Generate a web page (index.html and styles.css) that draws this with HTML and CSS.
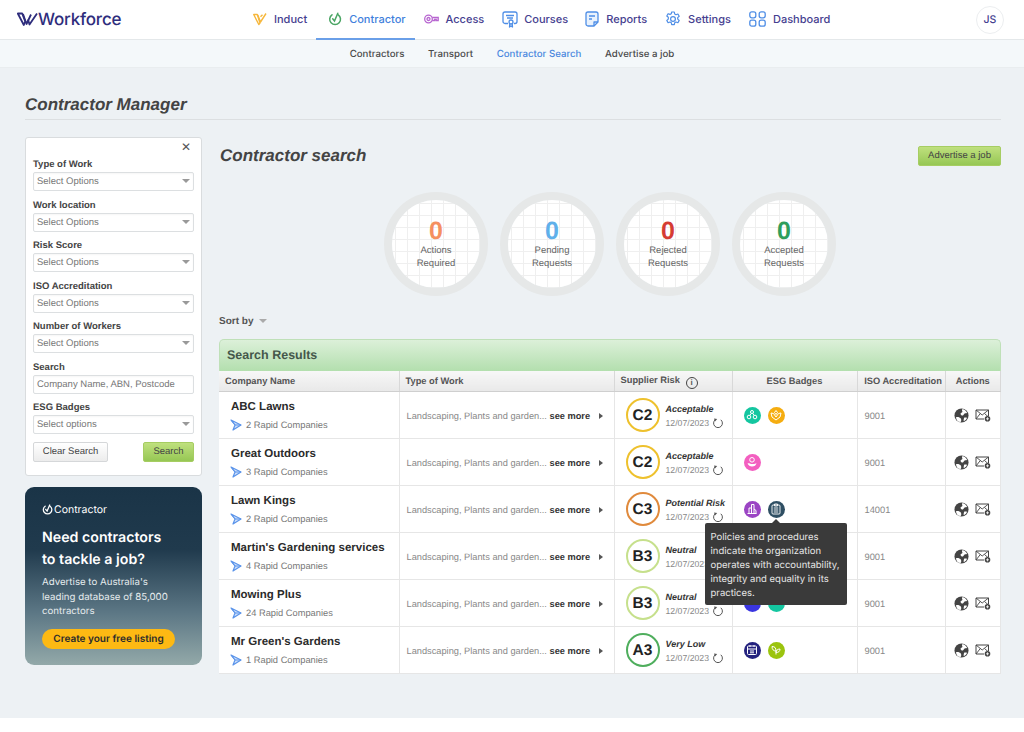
FILE: index.html
```html
<!DOCTYPE html>
<html>
<head>
    <title>Contractor Manager</title>
    <link rel="stylesheet" href="styles.css">
</head>
<body>
    <svg class="defs" width="0" height="0">
        <symbol id="rapid" viewBox="0 0 12 12">
            <path d="M1 1l10 5-8 5 2-5z" fill="#cfe0fb" stroke="#5b94ea" stroke-width="1.2" stroke-linejoin="round"/>
            <path d="M1 1l4 5h6" fill="none" stroke="#5b94ea" stroke-width="1"/>
        </symbol>
        <symbol id="refresh" viewBox="0 0 12 12">
            <path d="M8.8 2.8a4.4 4.4 0 1 1-5.6 0" fill="none" stroke="#555" stroke-width="1"/>
            <path d="M2 1.400l3.200.6-2.200 2.400z" fill="#555"/>
        </symbol>
        <symbol id="globe" viewBox="0 0 16 16">
            <circle cx="8" cy="8" r="7.5" fill="#444"/>
            <path d="M9 1c2 .5 4 2 5 4-1 1-2 0-3 1s-1 2-2 2-2-1-2-2 2-1 2-2-1-1 0-3zM2 10c2-1 4 0 5 1s1 3 0 4c-3 0-4-2-5-5zM11 10c1 0 2 0 3 .5-1 2-2 3-3.5 3.5-.5-1 0-3 .5-4z" fill="#fff"/>
        </symbol>
        <symbol id="mail" viewBox="0 0 16 14">
            <path d="M13.5 8V2H1v9h8" fill="#fff" stroke="#444" stroke-width="1"/>
            <path d="M1 2l6.2 5 6.3-5M1 11l4.3-5.500M13.5 9L9.5 5.500" fill="none" stroke="#444" stroke-width=".9"/>
            <circle cx="12.5" cy="10.8" r="2.8" fill="#444"/>
            <path d="M12.5 9.3v3M11 10.8h3" stroke="#fff" stroke-width=".8"/>
        </symbol>
        <symbol id="esg-people" viewBox="0 0 12 12">
            <g fill="none" stroke="#fff" stroke-width="1">
                <circle cx="6" cy="3" r="1.5"/><circle cx="3" cy="8" r="1.8"/><circle cx="9" cy="8" r="1.8"/>
                <path d="M5 4.500L4 6.400M7 4.500L8 6.400"/>
            </g>
        </symbol>
        <symbol id="esg-hands" viewBox="0 0 12 12">
            <g fill="none" stroke="#fff" stroke-width="1" stroke-linejoin="round">
                <path d="M6 5.500L4.500 3.500 6 1.500l1.500 2zM1 4l2.500.5L6 8l2.500-3.500L11 4l-1 4-4 3-4-3z"/>
            </g>
        </symbol>
        <symbol id="esg-care" viewBox="0 0 12 12">
            <circle cx="6" cy="3.8" r="2.3" fill="none" stroke="#fff" stroke-width="1"/>
            <path d="M1.500 7.500C3 6.800 4 7.300 5 8h3l2.500-.8c-.5 2-2 3.300-4.500 3.300-2 0-3.500-1-4.500-3z" fill="#fff"/>
        </symbol>
        <symbol id="esg-build" viewBox="0 0 12 12">
            <g fill="none" stroke="#fff" stroke-width="1">
                <path d="M1.500 10.500h9M3 10.500V5h2.500v5.500M5.500 10.500V1.500h2.500v9M8 6l2 1.500v3"/>
            </g>
        </symbol>
        <symbol id="esg-policy" viewBox="0 0 12 12">
            <g fill="none" stroke="#fff" stroke-width=".9">
                <rect x="2" y="2" width="8" height="9" rx="1"/>
                <path d="M4.500 1h3v2h-3zM3.800 5h4.400M3.800 7h4.400M3.800 9h4.400"/>
            </g>
        </symbol>
        <symbol id="esg-leaf" viewBox="0 0 12 12">
            <g fill="none" stroke="#fff" stroke-width="1" stroke-linejoin="round">
                <path d="M6 10.500V7M6 7C3.500 7 2 5.500 2 2.500c3 0 4 1.500 4 4.500zM6 8.500c0-2 1.500-3.500 4-3.500 0 2.500-1.500 3.500-4 3.500z"/>
            </g>
        </symbol>
        <symbol id="esg-cal" viewBox="0 0 12 12">
            <g fill="none" stroke="#fff" stroke-width="1">
                <rect x="1.500" y="2" width="9" height="8.500" rx="1"/>
                <path d="M1.500 5h9M4 1v2M8 1v2M4 7h4M4 8.800h4"/>
            </g>
        </symbol>
    </svg>

    <header class="topnav">
        <a class="logo">
            <svg width="21" height="15" viewBox="0 0 21 15" fill="none" stroke="#2e2d7c" stroke-width="1.8" stroke-linejoin="round">
                <path d="M.8 1.500h4.400l3 8L6.800 13z"/>
                <path d="M6 2l3.500 10L14 2.500"/>
                <path d="M11 7.500l1.500 5L20 1.500"/>
            </svg>
            <span>Workforce</span>
        </a>
        <nav class="mainlinks">
            <a class="mainlink">
                <svg width="14" height="14" viewBox="0 0 14 14" fill="none" stroke="#f6b73c" stroke-width="1.4" stroke-linejoin="round">
                    <path d="M.7 2.500h3.600L7 11 5.800 12.500z"/><path d="M4.800 3L7.500 10 13 1.500"/><path d="M7.500 4.800L9.500 2.800"/>
                </svg>
                Induct
            </a>
            <a class="mainlink active">
                <svg width="14" height="14" viewBox="0 0 14 14" fill="none" stroke="#4aa564" stroke-width="1.5" stroke-linecap="round">
                    <path d="M4 2.800a5.400 5.400 0 1 0 6.200 0"/><path d="M4.700 6.800l1.800 2.200L9.800 1.300"/>
                </svg>
                Contractor
            </a>
            <a class="mainlink">
                <svg width="15" height="14" viewBox="0 0 15 14" fill="none" stroke="#b765d0" stroke-width="1.3">
                    <circle cx="4.500" cy="7" r="3.800"/><circle cx="4.500" cy="7" r="1.500"/>
                    <path d="M8.200 5.500h6v3h-2v-1h-1.500v1H8.200"/>
                </svg>
                Access
            </a>
            <a class="mainlink tight">
                <svg width="16" height="17" viewBox="0 0 16 17" fill="none" stroke="#4f8ee6" stroke-width="1.3" stroke-linejoin="round">
                    <path d="M6 12.500H3a2 2 0 0 1-2-2V3a2 2 0 0 1 2-2h10a2 2 0 0 1 2 2v7.500a2 2 0 0 1-2 2h-1"/>
                    <path d="M4 4.500h8M5 7h6"/><circle cx="9" cy="11" r="2"/><path d="M7.800 12.800L7.500 16l1.500-1 1.500 1-.3-3.200"/>
                </svg>
                Courses
            </a>
            <a class="mainlink">
                <svg width="14" height="16" viewBox="0 0 14 16" fill="#e9f2fd" stroke="#4f8ee6" stroke-width="1.3" stroke-linejoin="round">
                    <path d="M3 1h8a2 2 0 0 1 2 2v8l-4 4H3a2 2 0 0 1-2-2V3a2 2 0 0 1 2-2z"/>
                    <path d="M4 5h6M4 8h3M13 11H9v4" fill="none"/>
                </svg>
                Reports
            </a>
            <a class="mainlink">
                <svg width="16" height="16" viewBox="0 0 16 16" fill="none" stroke="#4f8ee6" stroke-width="1.2" stroke-linejoin="round">
                    <circle cx="8" cy="8" r="2.400"/>
                    <path d="M6.700 1h2.600l.4 2 1.300.7 1.900-.7 1.300 2.300-1.500 1.300v1.500l1.500 1.300-1.300 2.300-1.900-.7-1.300.7-.4 2H6.700l-.4-2-1.300-.7-1.900.7-1.300-2.300 1.500-1.300V6.300L1.800 5l1.300-2.300 1.900.7 1.300-.7z"/>
                </svg>
                Settings
            </a>
            <a class="mainlink">
                <svg width="17" height="16" viewBox="0 0 17 16" fill="none" stroke="#4f8ee6" stroke-width="1.3">
                    <rect x=".8" y=".8" width="6" height="6" rx="2"/><rect x="10.200" y=".8" width="6" height="6" rx="2"/>
                    <rect x=".8" y="9.200" width="6" height="6" rx="2"/><rect x="10.200" y="9.200" width="6" height="6" rx="2"/>
                </svg>
                Dashboard
            </a>
        </nav>
        <div class="avatar">JS</div>
    </header>

    <div class="subnav">
        <a>Contractors</a>
        <a>Transport</a>
        <a class="current">Contractor Search</a>
        <a>Advertise a job</a>
    </div>

    <main class="page">
        <h1>Contractor Manager</h1>
        <div class="columns">
            <aside class="side">
                <form class="filters">
                    <div class="close">&#10005;</div>
                    <label>Type of Work</label>
                    <div class="field select">Select Options</div>
                    <label>Work location</label>
                    <div class="field select">Select Options</div>
                    <label>Risk Score</label>
                    <div class="field select">Select Options</div>
                    <label>ISO Accreditation</label>
                    <div class="field select">Select Options</div>
                    <label>Number of Workers</label>
                    <div class="field select">Select Options</div>
                    <label>Search</label>
                    <div class="field">Company Name, ABN, Postcode</div>
                    <label>ESG Badges</label>
                    <div class="field select">Select options</div>
                    <div class="filter-btns">
                        <div class="btn btn-plain">Clear Search</div>
                        <div class="btn btn-green">Search</div>
                    </div>
                </form>
                <div class="promo">
                    <div class="promo-logo">
                        <svg width="11" height="11" viewBox="0 0 14 14" fill="none" stroke="#fff" stroke-width="1.6" stroke-linecap="round">
                            <path d="M4 2.800a5.400 5.400 0 1 0 6.200 0"/><path d="M4.700 6.800l1.800 2.200L9.800 1.300"/>
                        </svg>
                        Contractor
                    </div>
                    <h3>Need contractors<br>to tackle a job?</h3>
                    <p>Advertise to Australia's leading database of 85,000 contractors</p>
                    <div class="promo-btn">Create your free listing</div>
                </div>
            </aside>

            <section class="results">
                <div class="results-top">
                    <h2>Contractor search</h2>
                    <div class="btn btn-green btn-advert">Advertise a job</div>
                </div>
                <div class="stats">
                    <div class="stat"><div class="stat-inner"><b class="c-orange">0</b><span>Actions<br>Required</span></div></div>
                    <div class="stat"><div class="stat-inner"><b class="c-blue">0</b><span>Pending<br>Requests</span></div></div>
                    <div class="stat"><div class="stat-inner"><b class="c-red">0</b><span>Rejected<br>Requests</span></div></div>
                    <div class="stat"><div class="stat-inner"><b class="c-green">0</b><span>Accepted<br>Requests</span></div></div>
                </div>
                <div class="sortby">Sort by <i></i></div>
                <div class="results-head">Search Results</div>
                <table class="grid">
                    <colgroup>
                        <col class="col-name"><col class="col-work"><col class="col-risk"><col class="col-esg"><col class="col-iso"><col>
                    </colgroup>
                    <thead>
                        <tr>
                            <th>Company Name</th>
                            <th>Type of Work</th>
                            <th>Supplier Risk <span class="info">i</span></th>
                            <th class="mid">ESG Badges</th>
                            <th class="mid iso-head">ISO Accreditation</th>
                            <th class="mid">Actions</th>
                        </tr>
                    </thead>
                    <tbody>
                        <tr>
                            <td><div class="co">ABC Lawns</div><div class="rapid"><svg width="12" height="12"><use href="#rapid"/></svg>2 Rapid Companies</div></td>
                            <td><div class="work"><span>Landscaping, Plants and garden...</span> <b>see more</b> <i></i></div></td>
                            <td><div class="risk"><div class="grade g-c2">C2</div><div class="risk-text"><em>Acceptable</em><div class="when">12/07/2023 <svg width="12" height="12"><use href="#refresh"/></svg></div></div></div></td>
                            <td><div class="esg"><span class="dot d-teal"><svg width="12" height="12"><use href="#esg-people"/></svg></span><span class="dot d-amber"><svg width="12" height="12"><use href="#esg-hands"/></svg></span></div></td>
                            <td class="iso">9001</td>
                            <td><div class="acts"><svg width="15" height="15"><use href="#globe"/></svg><svg width="16" height="14"><use href="#mail"/></svg></div></td>
                        </tr>
                        <tr>
                            <td><div class="co">Great Outdoors</div><div class="rapid"><svg width="12" height="12"><use href="#rapid"/></svg>3 Rapid Companies</div></td>
                            <td><div class="work"><span>Landscaping, Plants and garden...</span> <b>see more</b> <i></i></div></td>
                            <td><div class="risk"><div class="grade g-c2">C2</div><div class="risk-text"><em>Acceptable</em><div class="when">12/07/2023 <svg width="12" height="12"><use href="#refresh"/></svg></div></div></div></td>
                            <td><div class="esg"><span class="dot d-pink"><svg width="12" height="12"><use href="#esg-care"/></svg></span></div></td>
                            <td class="iso">9001</td>
                            <td><div class="acts"><svg width="15" height="15"><use href="#globe"/></svg><svg width="16" height="14"><use href="#mail"/></svg></div></td>
                        </tr>
                        <tr>
                            <td><div class="co">Lawn Kings</div><div class="rapid"><svg width="12" height="12"><use href="#rapid"/></svg>2 Rapid Companies</div></td>
                            <td><div class="work"><span>Landscaping, Plants and garden...</span> <b>see more</b> <i></i></div></td>
                            <td><div class="risk"><div class="grade g-c3">C3</div><div class="risk-text"><em>Potential Risk</em><div class="when">12/07/2023 <svg width="12" height="12"><use href="#refresh"/></svg></div></div></div></td>
                            <td><div class="esg"><span class="dot d-purple"><svg width="12" height="12"><use href="#esg-build"/></svg></span><span class="dot d-slate"><svg width="12" height="12"><use href="#esg-policy"/></svg><div class="tip">Policies and procedures indicate the organization operates with accountability, integrity and equality in its practices.</div></span></div></td>
                            <td class="iso">14001</td>
                            <td><div class="acts"><svg width="15" height="15"><use href="#globe"/></svg><svg width="16" height="14"><use href="#mail"/></svg></div></td>
                        </tr>
                        <tr>
                            <td><div class="co">Martin's Gardening services</div><div class="rapid"><svg width="12" height="12"><use href="#rapid"/></svg>4 Rapid Companies</div></td>
                            <td><div class="work"><span>Landscaping, Plants and garden...</span> <b>see more</b> <i></i></div></td>
                            <td><div class="risk"><div class="grade g-b3">B3</div><div class="risk-text"><em>Neutral</em><div class="when">12/07/2023 <svg width="12" height="12"><use href="#refresh"/></svg></div></div></div></td>
                            <td></td>
                            <td class="iso">9001</td>
                            <td><div class="acts"><svg width="15" height="15"><use href="#globe"/></svg><svg width="16" height="14"><use href="#mail"/></svg></div></td>
                        </tr>
                        <tr>
                            <td><div class="co">Mowing Plus</div><div class="rapid"><svg width="12" height="12"><use href="#rapid"/></svg>24 Rapid Companies</div></td>
                            <td><div class="work"><span>Landscaping, Plants and garden...</span> <b>see more</b> <i></i></div></td>
                            <td><div class="risk"><div class="grade g-b3">B3</div><div class="risk-text"><em>Neutral</em><div class="when">12/07/2023 <svg width="12" height="12"><use href="#refresh"/></svg></div></div></div></td>
                            <td><div class="esg"><span class="dot d-blue"></span><span class="dot d-teal"></span></div></td>
                            <td class="iso">9001</td>
                            <td><div class="acts"><svg width="15" height="15"><use href="#globe"/></svg><svg width="16" height="14"><use href="#mail"/></svg></div></td>
                        </tr>
                        <tr>
                            <td><div class="co">Mr Green's Gardens</div><div class="rapid"><svg width="12" height="12"><use href="#rapid"/></svg>1 Rapid Companies</div></td>
                            <td><div class="work"><span>Landscaping, Plants and garden...</span> <b>see more</b> <i></i></div></td>
                            <td><div class="risk"><div class="grade g-a3">A3</div><div class="risk-text"><em>Very Low</em><div class="when">12/07/2023 <svg width="12" height="12"><use href="#refresh"/></svg></div></div></div></td>
                            <td><div class="esg"><span class="dot d-navy"><svg width="12" height="12"><use href="#esg-cal"/></svg></span><span class="dot d-lime"><svg width="12" height="12"><use href="#esg-leaf"/></svg></span></div></td>
                            <td class="iso">9001</td>
                            <td><div class="acts"><svg width="15" height="15"><use href="#globe"/></svg><svg width="16" height="14"><use href="#mail"/></svg></div></td>
                        </tr>
                    </tbody>
                </table>
            </section>
        </div>
    </main>
</body>
</html>
```

FILE: styles.css
```css
* {
    margin: 0;
    padding: 0;
    box-sizing: border-box;
}

html {
    background: #fff;
}

body {
    font-family: 'Liberation Sans', Arial, sans-serif;
    color: #444;
    text-rendering: geometricPrecision;
}

.defs {
    position: absolute;
}

/* top bar */
.topnav {
    height: 40px;
    background: #fff;
    border-bottom: 1px solid #e4e8ea;
    display: flex;
    align-items: stretch;
    padding-left: 17px;
    font-family: 'Inter', sans-serif;
}

.logo {
    width: 227px;
    display: flex;
    align-items: center;
    color: #2e2d7c;
    font-size: 17px;
    font-weight: 500;
    letter-spacing: -0.2px;
}

.mainlinks {
    display: flex;
}

.mainlink {
    display: flex;
    align-items: center;
    gap: 7px;
    padding: 0 9px;
    font-size: 11px;
    font-weight: 500;
    color: #45408f;
    height: 40px;
    border-bottom: 2px solid transparent;
}

.mainlink.tight {
    gap: 6px;
    padding-right: 8px;
}

.mainlink.active {
    color: #3f7fdc;
    padding-left: 12px;
    border-bottom-color: #6a9fe8;
}

.avatar {
    margin-left: auto;
    margin-right: 20px;
    align-self: center;
    width: 28px;
    height: 28px;
    border: 1px solid #eceef0;
    border-radius: 50%;
    display: flex;
    align-items: center;
    justify-content: center;
    font-size: 10.5px;
    font-weight: 500;
    color: #45408f;
}

.subnav {
    height: 28px;
    padding-top: 1px;
    background: #f4f8fa;
    border-bottom: 1px solid #e9edef;
    display: flex;
    justify-content: center;
    align-items: center;
    gap: 23.5px;
    font-family: 'Inter', sans-serif;
    font-size: 9.7px;
    font-weight: 500;
    color: #4a4a4a;
}

.subnav .current {
    color: #4a87de;
}

/* page */
.page {
    background: #edf1f4;
    height: 650px;
    padding: 27px 23px 0 25px;
}

h1 {
    font-size: 17px;
    font-style: italic;
    font-weight: bold;
    color: #444;
    height: 25px;
    line-height: 20px;
    border-bottom: 1px solid #dcdfe1;
}

.columns {
    display: flex;
    gap: 17px;
    margin-top: 17px;
}

.side {
    width: 177px;
    flex-shrink: 0;
}

/* filters */
.filters {
    position: relative;
    height: 339px;
    background: #fff;
    border: 1px solid #d9dcde;
    border-radius: 3px;
    padding: 20px 7px 0;
}

.close {
    position: absolute;
    top: 2px;
    right: 10px;
    font-size: 12px;
    color: #555;
}

.filters label {
    display: block;
    font-size: 9.5px;
    font-weight: bold;
    color: #444;
    height: 14px;
    line-height: 14px;
}

.field {
    height: 19px;
    margin-bottom: 7.5px;
    border: 1px solid #dcdfe1;
    border-radius: 2px;
    padding: 0 3px;
    font-size: 9.5px;
    line-height: 18px;
    color: #777;
    background: #fff;
    box-shadow: inset 0 1px 2px rgba(0, 0, 0, 0.04);
    position: relative;
}

.select::after {
    content: "";
    position: absolute;
    right: 3px;
    top: 6px;
    border-left: 4px solid transparent;
    border-right: 4px solid transparent;
    border-top: 4px solid #999;
}

.filter-btns {
    display: flex;
    justify-content: space-between;
}

.btn {
    height: 20px;
    line-height: 18px;
    border-radius: 2px;
    font-size: 9.5px;
    text-align: center;
    color: #444;
}

.btn-plain {
    width: 75px;
    border: 1px solid #d5d7d9;
    background: linear-gradient(#fff, #ececec);
}

.btn-green {
    width: 51px;
    border: 1px solid #a6cd62;
    background: linear-gradient(#bfe07e, #96c754);
}

/* promo card */
.promo {
    margin-top: 11px;
    height: 178px;
    border-radius: 9px;
    padding: 16px 17px 0;
    color: #fff;
    background: linear-gradient(#1a3447 0%, #203a4d 35%, #5b7684 70%, #93a9a9 100%);
    font-family: 'Inter', sans-serif;
}

.promo-logo {
    display: flex;
    align-items: center;
    gap: 1px;
    font-size: 10.5px;
    height: 13px;
}

.promo h3 {
    margin-top: 11px;
    font-size: 14.2px;
    font-weight: 600;
    line-height: 22px;
}

.promo p {
    margin-top: 5px;
    width: 132px;
    font-size: 9.7px;
    line-height: 14.5px;
    color: #e6ecee;
}

.promo-btn {
    margin-top: 9px;
    width: 133px;
    height: 20px;
    border-radius: 10px;
    background: #fdb913;
    color: #2c2c2c;
    font-size: 10px;
    font-weight: 600;
    line-height: 21px;
    text-align: center;
}

/* results */
.results {
    flex: 1;
    min-width: 0;
}

.results-top {
    display: flex;
    justify-content: space-between;
    align-items: center;
    height: 38px;
}

.results-top h2 {
    padding-left: 1px;
    font-size: 17px;
    font-style: italic;
    color: #444;
}

.btn-advert {
    width: 83px;
    margin-bottom: 1px;
}

.stats {
    display: flex;
    justify-content: center;
    gap: 12px;
    margin-top: 17px;
}

.stat {
    width: 104px;
    height: 104px;
    border-radius: 50%;
    border: 8px solid #e6e8e8;
}

.stat-inner {
    height: 100%;
    border-radius: 50%;
    background-color: #fff;
    background-image:
        linear-gradient(#efefef 1px, transparent 1px),
        linear-gradient(90deg, #efefef 1px, transparent 1px);
    background-size: 12px 12px;
    background-position: 3px 3px;
    text-align: center;
    padding-top: 17px;
}

.stat-inner b {
    display: block;
    font-size: 25px;
    line-height: 28px;
}

.stat-inner span {
    display: block;
    font-size: 9.5px;
    line-height: 12.5px;
    color: #666;
}

.c-orange { color: #f5905f; }
.c-blue { color: #5fb0ea; }
.c-red { color: #d53c33; }
.c-green { color: #2f9e5c; }

.sortby {
    margin-top: 19px;
    height: 12px;
    font-size: 10px;
    font-weight: bold;
    color: #555;
    line-height: 13px;
}

.sortby i {
    display: inline-block;
    margin-left: 3px;
    vertical-align: 1px;
    border-left: 4px solid transparent;
    border-right: 4px solid transparent;
    border-top: 4px solid #aaa;
}

.results-head {
    margin-top: 12px;
    height: 32px;
    line-height: 30px;
    padding-left: 7px;
    font-size: 12.5px;
    font-weight: bold;
    color: #44574a;
    border: 1px solid #bfe0b8;
    border-bottom: 0;
    border-radius: 5px 5px 0 0;
    background: linear-gradient(#dcf0d9, #b3dfae);
}

/* table */
.grid {
    width: 782px;
    table-layout: fixed;
    border-collapse: collapse;
    background: #fff;
}

.col-name { width: 180px; }
.col-work { width: 215px; }
.col-risk { width: 118px; }
.col-esg { width: 125px; }
.col-iso { width: 88px; }

.grid th {
    height: 20px;
    background: linear-gradient(#f7f7f7, #e9e9e9);
    border-right: 1px solid #d8d8d8;
    border-bottom: 1px solid #cfcfcf;
    font-size: 9.3px;
    color: #555;
    text-align: left;
    padding-left: 6px;
    white-space: nowrap;
}

.grid th.mid {
    text-align: center;
    padding: 0;
}

.grid th.iso-head {
    padding-left: 4px;
}

.info {
    display: inline-block;
    width: 12px;
    height: 12px;
    margin: -3px 0 -3px 3px;
    border: 1px solid #444;
    border-radius: 50%;
    font-size: 8px;
    line-height: 10px;
    text-align: center;
    vertical-align: -2px;
}

.grid td {
    height: 47px;
    border-right: 1px solid #e6e6e6;
    border-bottom: 1px solid #e6e6e6;
    vertical-align: middle;
}

.co {
    margin-top: 1px;
    padding-left: 12px;
    font-size: 11.5px;
    font-weight: bold;
    color: #2b2b2b;
    line-height: 14px;
    white-space: nowrap;
}

.rapid {
    margin-top: 5px;
    padding-left: 11px;
    display: flex;
    align-items: center;
    gap: 4px;
    font-size: 9.3px;
    color: #777;
    line-height: 12px;
}

.work {
    padding: 2px 0 0 7px;
    font-size: 9.25px;
    white-space: nowrap;
    color: #888;
}

.work b {
    color: #333;
}

.work i {
    display: inline-block;
    margin-left: 6px;
    border-top: 3px solid transparent;
    border-bottom: 3px solid transparent;
    border-left: 4px solid #555;
}

.risk {
    display: flex;
    align-items: center;
    gap: 6px;
    padding-left: 11px;
}

.risk-text {
    padding-top: 4px;
}

.grade {
    width: 34px;
    height: 34px;
    flex-shrink: 0;
    padding-top: 2px;
    border-radius: 50%;
    border: 2px solid;
    display: flex;
    align-items: center;
    justify-content: center;
    font-size: 15.5px;
    font-weight: bold;
    color: #222;
}

.g-c2 { border-color: #eec12d; }
.g-c3 { border-color: #e08a3c; }
.g-b3 { border-color: #c6e08c; }
.g-a3 { border-color: #4fae5d; }

.risk em {
    display: block;
    font-size: 9px;
    font-weight: bold;
    color: #333;
    line-height: 11px;
    white-space: nowrap;
}

.when {
    display: flex;
    align-items: center;
    gap: 3px;
    margin-top: 2px;
    font-size: 8.7px;
    color: #888;
    line-height: 12px;
    white-space: nowrap;
}

.esg {
    display: flex;
    gap: 7px;
    padding: 1px 0 0 11px;
}

.dot {
    position: relative;
    width: 17px;
    height: 17px;
    border-radius: 50%;
    display: flex;
    align-items: center;
    justify-content: center;
}

.d-teal { background: #14c6a0; }
.d-amber { background: #f5ad10; }
.d-pink { background: #f35fc0; }
.d-purple { background: #9b45c4; }
.d-slate { background: #2f4f63; }
.d-blue { background: #3a35e0; }
.d-navy { background: #24227e; }
.d-lime { background: #9bc40e; }

.tip {
    position: absolute;
    z-index: 5;
    top: 22px;
    left: -63px;
    width: 142px;
    height: 82px;
    padding: 8px 6px 0;
    border-radius: 2px;
    background: #3a3a3a;
    color: #e8e8e8;
    font-family: 'Inter', sans-serif;
    font-size: 9.5px;
    line-height: 14.2px;
}

.tip::before {
    content: "";
    position: absolute;
    top: -4px;
    left: 67px;
    border-left: 4px solid transparent;
    border-right: 4px solid transparent;
    border-bottom: 4px solid #3a3a3a;
}

.iso {
    padding: 3px 0 0 7px;
    font-size: 9.3px;
    color: #888;
}

.acts {
    display: flex;
    align-items: center;
    gap: 6px;
    padding: 1px 0 0 8px;
}
```
